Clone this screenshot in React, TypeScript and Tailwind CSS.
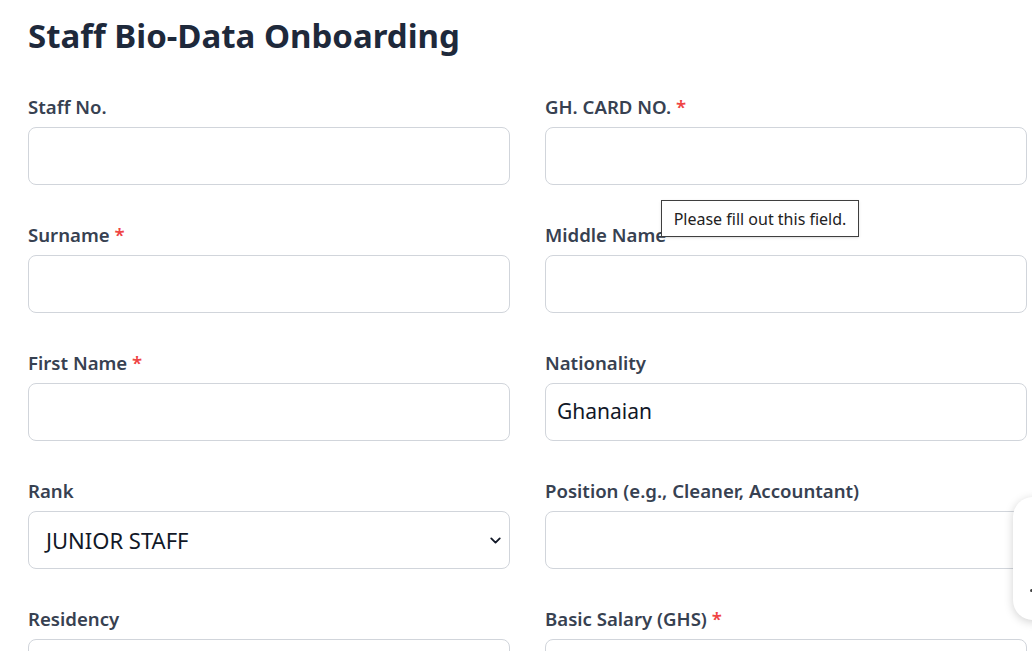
import React from 'react';
import { ChevronDown } from 'lucide-react';

interface Field {
  label: string;
  required?: boolean;
  value?: string;
  select?: boolean;
}

const fields: Field[] = [
  { label: 'Staff No.' },
  { label: 'GH. CARD NO.', required: true },
  { label: 'Surname', required: true },
  { label: 'Middle Name' },
  { label: 'First Name', required: true },
  { label: 'Nationality', value: 'Ghanaian' },
  { label: 'Rank', select: true, value: 'JUNIOR STAFF' },
  { label: 'Position (e.g., Cleaner, Accountant)' },
  { label: 'Residency' },
  { label: 'Basic Salary (GHS)', required: true },
];

const FormField: React.FC<{ field: Field }> = ({ field }) => (
  <div className="flex flex-col">
    <label className="text-[18.6px] leading-[30px] font-semibold text-[#374151] mb-[5px]">
      {field.label}
      {field.required && <span className="text-[#ef4444]"> *</span>}
    </label>
    {field.select ? (
      <div className="h-[58px] rounded-lg border border-[#d1d5db] bg-white flex items-center justify-between pl-[17px] pr-[5px]">
        <span className="text-[22px] text-[#111827]">{field.value}</span>
        <ChevronDown className="w-[17px] h-[17px] text-[#111827]" strokeWidth={2.6} />
      </div>
    ) : (
      <div className="h-[58px] rounded-lg border border-[#d1d5db] bg-white flex items-center px-[11px]">
        <span className="text-[21px] text-[#111827]">{field.value ?? ''}</span>
      </div>
    )}
  </div>
);

export default function App() {
  return (
    <div
      className="relative w-[1032px] h-[651px] overflow-hidden bg-white"
      style={{ fontFamily: '"Noto Sans", "Open Sans", Arial, sans-serif' }}
    >
      <div className="pl-[28px] pt-[14px]">
        <h1 className="text-[33px] leading-[44px] font-bold text-[#1e293b]">
          Staff Bio-Data Onboarding
        </h1>
        <div className="mt-[34px] w-[999px] grid grid-cols-2 gap-x-[35px] gap-y-[35px]">
          {fields.map((f) => (
            <FormField key={f.label} field={f} />
          ))}
        </div>
      </div>

      {/* validation tooltip */}
      <div className="absolute left-[661px] top-[200px] w-[198px] h-[37px] border border-[#3f3f3f] bg-white flex items-center justify-center shadow-sm">
        <span className="text-[16px] text-[#222]">Please fill out this field.</span>
      </div>

      {/* floating widget at the edge */}
      <div className="absolute left-[1013px] top-[497px] w-[60px] h-[123px] rounded-[20px] bg-white shadow-[0_2px_10px_rgba(0,0,0,0.18)]">
        <div className="absolute left-[17px] top-[92px] w-[3px] h-[3px] rounded-full bg-[#444]" />
      </div>
    </div>
  );
}
